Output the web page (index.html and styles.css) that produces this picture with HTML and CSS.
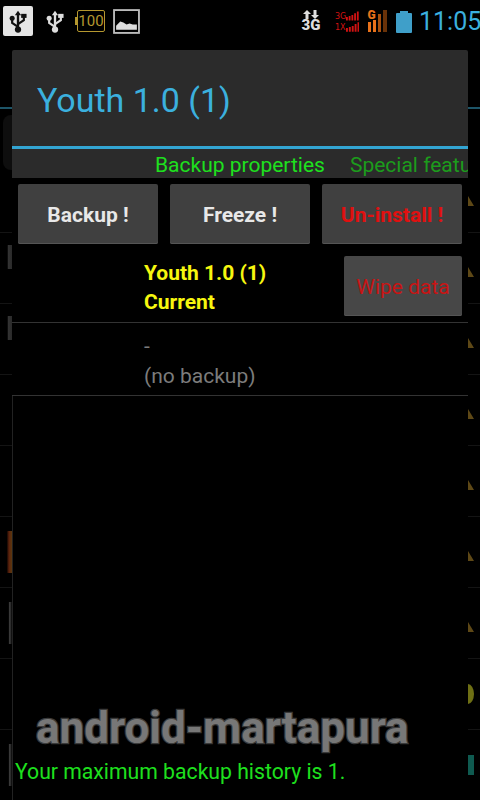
FILE: index.html
```html
<!DOCTYPE html>
<html lang="en">
<head>
<meta charset="utf-8">
<title>Youth 1.0 (1)</title>
<link rel="stylesheet" href="styles.css">
</head>
<body>
<div class="screen">
  <div class="backdrop">
    <div class="bline"></div>
    <div class="bpanel"></div>
    <div class="brow"><i class="scrap none"></i><i class="tri"></i></div>
    <div class="brow"><i class="scrap grey"></i><i class="tri"></i></div>
    <div class="brow"><i class="scrap grey"></i><i class="tri"></i></div>
    <div class="brow"><i class="scrap none"></i><i class="tri"></i></div>
    <div class="brow"><i class="scrap none"></i><i class="tri"></i></div>
    <div class="brow"><i class="scrap orange"></i><i class="tri"></i></div>
    <div class="brow"><i class="scrap tall"></i><i class="tri"></i></div>
    <div class="brow"><i class="scrap none"></i><i class="moon"></i></div>
    <div class="brow"><i class="scrap tall"></i><i class="teal"></i></div>
  </div>

  <header class="status">
    <div class="usb-box">
      <svg class="usb" viewBox="0 0 20 26"><path d="M10 1l3.500 5H11.300v15H8.700V6H6.500z" fill="#111"/><path d="M10 19 3.500 14.500V11M10 16l6.500-4.500V8" fill="none" stroke="#111" stroke-width="2.400"/><circle cx="3.500" cy="9.500" r="2.800" fill="#111"/><rect x="13.500" y="4.500" width="6" height="4.500" fill="#111"/><circle cx="10" cy="22" r="3.500" fill="#111"/></svg>
    </div>
    <svg class="usb usb-plain" viewBox="0 0 20 26"><path d="M10 1l3.500 5H11.300v15H8.700V6H6.500z" fill="#ddd"/><path d="M10 19 3.500 14.500V11M10 16l6.500-4.500V8" fill="none" stroke="#ddd" stroke-width="2.400"/><circle cx="3.500" cy="9.500" r="2.800" fill="#ddd"/><rect x="13.500" y="4.500" width="6" height="4.500" fill="#ddd"/><circle cx="10" cy="22" r="3.500" fill="#ddd"/></svg>
    <i class="nub"></i>
    <div class="batt-num"><span>100</span></div>
    <svg class="pic" viewBox="0 0 26 24"><rect x="1" y="1" width="24" height="22" fill="#000" stroke="#bbb" stroke-width="1.800"/><path d="M3 20v-4l4-4 3 1 3 2 3-1 3 1 4 0v5z" fill="#ddd"/></svg>
    <div class="net">
      <svg class="arrows" viewBox="0 0 16 9"><path d="M4 0l4 4H5.500v5h-3V4H0zM12 9 8 5h2.500V0h3v5H16z" fill="#ddd"/></svg>
      <span>3G</span>
    </div>
    <div class="dual">
      <div class="dual-row"><span>3G</span><svg viewBox="0 0 14 10"><path d="M0 6h2v4H0zM3 5h2v5H3zM6 4h2v6H6zM9 2h2v8H9zM12 0h2v10h-2z" fill="#d01212"/></svg></div>
      <div class="dual-row"><span>1X</span><svg viewBox="0 0 14 10"><path d="M0 6h2v4H0zM3 5h2v5H3zM6 4h2v6H6zM9 2h2v8H9zM12 0h2v10h-2z" fill="#d01212"/></svg></div>
    </div>
    <div class="gsm">
      <svg viewBox="0 0 20 22"><path d="M1 12h3v10H1zM6 8h3v14H6z" fill="#e8711a"/><path d="M11 4h3v18h-3z" fill="#a8500f"/><path d="M16 0h4v22h-4z" fill="#6a3208"/></svg>
      <span>G</span>
    </div>
    <svg class="batt" viewBox="0 0 16 23"><path d="M4 1h8v2h3a1 1 0 0 1 1 1v18a1 1 0 0 1-1 1H1a1 1 0 0 1-1-1V4a1 1 0 0 1 1-1h3z" fill="#3f9fc9"/></svg>
    <span class="clock">11:05</span>
  </header>

  <main class="dialog">
    <h1 class="title">Youth 1.0 (1)</h1>
    <nav class="tabs">
      <span class="tab on">Backup properties</span>
      <span class="tab">Special features</span>
    </nav>
    <div class="actions">
      <button class="btn strong">Backup !</button>
      <button class="btn strong">Freeze !</button>
      <button class="btn strong danger">Un-install !</button>
    </div>
    <section class="entry current">
      <div class="entry-text">Youth 1.0 (1)<br>Current</div>
      <button class="btn wipe">Wipe data</button>
    </section>
    <section class="entry none">
      <div class="entry-text">-<br>(no backup)</div>
    </section>
    <div class="rest"></div>
    <p class="note">Your maximum backup history is 1.</p>
  </main>

  <div class="watermark">android-martapura</div>
</div>
</body>
</html>
```

FILE: styles.css
```css
* { box-sizing: border-box; }
html, body { margin: 0; background: #000; }
body { font-family: Roboto, "Liberation Sans", sans-serif; }
.screen { position: relative; width: 480px; height: 800px; overflow: hidden; background: #000; }

/* dimmed list behind the dialog */
.backdrop { position: absolute; inset: 0; padding-top: 162px; }
.bline { position: absolute; left: 0; right: 0; top: 107px; height: 2px; background: #1d5568; }
.bpanel { position: absolute; left: 3px; top: 115px; width: 20px; height: 55px; border-radius: 8px; background: #0e0e0e; }
.brow { height: 71px; display: flex; justify-content: space-between; align-items: center; border-bottom: 1px solid #141414; }
.scrap { width: 12px; height: 24px; display: block; }
.scrap.none { background: none; }
.scrap.grey { background: linear-gradient(90deg, #000 60%, #333 70%, #2a2a2a 100%); margin-top: -22px; border-radius: 8px 0 0 8px; }
.scrap.orange { height: 42px; background: linear-gradient(90deg, #000 55%, #5e220c 75%, #5a3a10 100%); border-radius: 8px 0 0 8px; }
.scrap.tall { height: 42px; background: linear-gradient(90deg, #000 70%, #3a3a3a 78%, #2a2a2a 90%, #000 100%); }
.tri { display: block; width: 12px; height: 10px; margin-top: 8px; background: #5e4816; clip-path: polygon(0 0, 50% 100%, 0 100%); }
.moon { display: block; width: 12px; height: 20px; background: #6e6f14; clip-path: ellipse(6px 10px at 0 50%); }
.teal { display: block; width: 12px; height: 20px; background: linear-gradient(90deg, #0f5a50 50%, #000 50%); }

/* status bar */
.status { position: relative; height: 50px; padding: 4px 0 12px 3px; display: flex; align-items: center; overflow: hidden; }
.usb-box { width: 30px; height: 30px; flex: none; border-radius: 2px; background: #e4e4e4; display: flex; align-items: center; justify-content: center; }
.usb { width: 18px; height: 25px; }
.usb-plain { flex: none; margin-left: 13px; }
.nub { flex: none; width: 2px; height: 8px; margin-left: 11px; background: #b5982f; }
.batt-num { flex: none; width: 28px; height: 22px; border: 1px solid #b5982f; border-radius: 2px; display: flex; align-items: center; justify-content: center; }
.batt-num span { font-size: 15px; color: #b5982f; letter-spacing: 0; }
.pic { flex: none; width: 27px; height: 25px; margin-left: 8px; }
.net { flex: none; width: 16px; margin-left: 163px; display: flex; flex-direction: column; align-items: center; }
.arrows { width: 16px; height: 9px; }
.net span { font-size: 15px; line-height: 13px; font-weight: 900; color: #ddd; }
.dual { flex: none; width: 24px; margin-left: 16px; display: flex; flex-direction: column; gap: 1px; }
.dual-row { display: flex; align-items: flex-end; justify-content: space-between; height: 10px; }
.dual-row span { font-size: 8px; line-height: 8px; color: #d01212; font-family: "DejaVu Sans", sans-serif; }
.dual-row svg { width: 14px; height: 10px; }
.gsm { position: relative; flex: none; width: 20px; height: 22px; margin-left: 8px; }
.gsm svg { position: absolute; left: 0; top: 0; width: 20px; height: 22px; }
.gsm span { position: absolute; left: 0; top: 0; width: 9px; height: 10px; background: #000; font-size: 12px; line-height: 10px; font-weight: 900; color: #e8711a; text-align: center; }
.batt { flex: none; width: 16px; height: 23px; margin-left: 9px; }
.clock { flex: none; margin-left: 7px; font-size: 25px; color: #3bb0de; white-space: nowrap; }

/* dialog */
.dialog { position: relative; margin: 0 12px; width: 456px; height: 750px; background: #000; display: flex; flex-direction: column; }
.title { margin: 0; height: 99px; padding: 27px 0 0 25px; border-bottom: 3px solid #33a5d3; background: #2b2b2b; border-radius: 2px 2px 0 0; font-size: 34px; line-height: 46px; font-weight: 400; color: #3bb0de; }
.tabs { height: 29px; flex: none; background: #2b2b2b; display: flex; gap: 25px; padding-left: 143px; overflow: hidden; white-space: nowrap; font-size: 21px; line-height: 32px; color: #1c9c1c; }
.tab.on { color: #1ee01e; }
.actions { display: flex; gap: 12px; padding: 6px 6px 0; flex: none; }
.btn { height: 60px; padding: 0; border: 0; border-radius: 2px; background: #404040; box-shadow: inset 0 -1px 0 #555; font-family: inherit; font-size: 21px; line-height: 62px; color: #e8e8e8; }
.actions .btn { flex: 1; }
.strong { font-weight: 700; }
.danger { color: #e01010; }
.entry { flex: none; padding-left: 132px; display: flex; justify-content: space-between; border-bottom: 1px solid #333; }
.entry-text { font-size: 21px; line-height: 29px; }
.current { height: 79px; padding-right: 6px; }
.current .entry-text { padding-top: 15px; font-weight: 700; color: #f6f60f; }
.wipe { width: 118px; margin-top: 12px; background: #474747; color: #c81414; }
.none { height: 73px; }
.none .entry-text { padding-top: 8px; line-height: 30px; color: #7c7c7c; }
.rest { flex: 1; border-left: 1px solid #222; }
.note { position: absolute; left: 3px; top: 708px; margin: 0; font-size: 21.200px; line-height: 28px; color: #1ee01e; white-space: nowrap; }

.watermark { position: absolute; left: 36px; top: 702px; font-size: 44px; line-height: 52px; font-weight: 700; color: #777; -webkit-text-stroke: 2.500px #3a3a3a; paint-order: stroke fill; white-space: nowrap; }
```
